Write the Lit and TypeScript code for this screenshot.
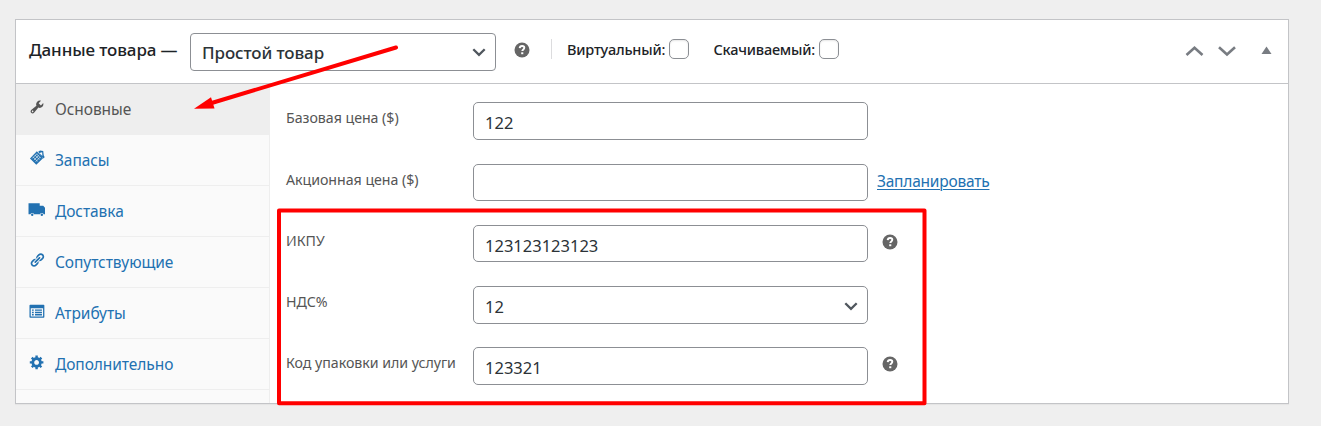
import { LitElement, html, css, svg } from "lit";
import { customElement } from "lit/decorators.js";

const icons: Record<string, unknown> = {
  wrench: svg`<path d="M16.68 9.77c-1.34 1.34-3.3 1.67-4.95.99l-5.41 6.52c-.99.99-2.59.99-3.58 0s-.99-2.59 0-3.57l6.52-5.42c-.68-1.65-.35-3.61.99-4.95 1.28-1.28 3.12-1.62 4.72-1.06l-2.89 2.89 2.82 2.82 2.86-2.87c.53 1.58.18 3.39-1.08 4.65zM3.81 16.21c.4.39 1.04.39 1.43 0 .4-.4.4-1.04 0-1.43-.39-.4-1.03-.4-1.43 0-.39.39-.39 1.03 0 1.43z"/>`,
  stock: svg`<path d="M9.800 1.500 1.200 10.700l7.900 7.800 8.700-8.400zM11.500 2.200l2.300-1.500 4 .6.600 5.400 1.200 2.300-1.800 1.500z"/><path d="M13 3.800l3.400-.9.300 4.600z" fill="#fafafa"/><path d="M4 10.600l5.900-6M6.100 12.700l5.900-6M8.200 14.800l5.900-6M5 8.500l5.700 5.800M7.300 6.200l5.700 5.800M9.300 4.700l5.400 5.500" fill="none" stroke="#fafafa" stroke-width=".75"/>`,
  truck: svg`<path d="M-.6 2.900h14v2.900h4.400L20 8.400v8.300h-1.700a2.300 2.300 0 0 0-4.500 0H6.300a2.300 2.300 0 0 0-4.500 0H-.6z"/><circle cx="4.050" cy="17.200" r="1.500"/><circle cx="16.050" cy="17.200" r="1.500"/>`,
  link: svg`<path d="M17.74 2.76c1.68 1.69 1.68 4.41 0 6.1l-1.53 1.52c-1.12 1.12-2.7 1.47-4.14 1.09l2.62-2.61.76-.77.76-.76c.84-.84.84-2.2 0-3.04-.84-.85-2.2-.85-3.04 0l-.77.76-3.38 3.38c-.37-1.44-.02-3.02 1.1-4.14l1.52-1.53c1.69-1.68 4.42-1.68 6.1 0zM8.59 13.43l5.34-5.34c.42-.42.42-1.1 0-1.52-.44-.43-1.13-.39-1.53 0l-5.33 5.34c-.42.42-.42 1.1 0 1.52.44.43 1.13.39 1.52 0zm-.76 2.29l4.14-4.15c.38 1.44.03 3.02-1.09 4.14l-1.52 1.53c-1.69 1.68-4.41 1.68-6.1 0-1.68-1.68-1.68-4.42 0-6.1l1.53-1.52c1.12-1.12 2.7-1.47 4.14-1.1l-4.14 4.15c-.85.84-.85 2.2 0 3.05.84.84 2.2.84 3.04 0z"/>`,
  list: svg`<path d="M18.300 18.500H1.500c-.5 0-.9-.4-.9-.9V3c0-.5.400-.9.900-.9h16.800c.5 0 .9.400.9.900v14.600c0 .5-.4.900-.9.900zM17.600 17V6.600H2.200V17zM7.500 8.100v1.700h8.700V8.100zM7.500 11v1.700h8.700V11zM7.500 13.900v1.700h8.700v-1.700zM3.700 8.100v1.700h2.200V8.100zM3.700 11v1.700h2.200V11zM3.700 13.900v1.700h2.200v-1.700z" fill-rule="evenodd"/>`,
  gear: svg`<path d="M18 12h-2.180c-.17.7-.44 1.350-.81 1.930l1.540 1.540-2.100 2.100-1.540-1.540c-.58.36-1.230.63-1.910.79V19H8v-2.180c-.68-.16-1.330-.43-1.910-.79l-1.540 1.540-2.120-2.120 1.540-1.540c-.36-.58-.63-1.230-.79-1.910H1V9.030h2.170c.16-.7.44-1.350.8-1.940L2.430 5.550l2.100-2.100 1.540 1.540c.58-.37 1.240-.64 1.930-.81V2h3v2.180c.68.16 1.330.43 1.910.79l1.540-1.540 2.120 2.120-1.540 1.540c.36.59.64 1.240.8 1.940H18V12zm-8.500 1.500c1.660 0 3-1.340 3-3s-1.340-3-3-3-3 1.340-3 3 1.340 3 3 3z"/>`,
};

const tabs = [
  ["wrench", "Основные"],
  ["stock", "Запасы"],
  ["truck", "Доставка"],
  ["link", "Сопутствующие"],
  ["list", "Атрибуты"],
  ["gear", "Дополнительно"],
];

const chevron = html`<svg width="14" height="9" viewBox="0 0 14 9"><path d="M1.300 1.300 7 6.900l5.700-5.600" fill="none" stroke="#50575e" stroke-width="2.300"/></svg>`;
const help = html`<svg class="help" width="16" height="16" viewBox="0 0 16 16"><circle cx="8" cy="8" r="7.500" fill="#666"/><path d="M5.700 6.100c.1-1.400 1-2.100 2.400-2.100 1.300 0 2.200.7 2.200 1.800 0 1.700-2 1.600-2 3.300" fill="none" stroke="#fff" stroke-width="1.900"/><rect x="7.200" y="10.300" width="2.100" height="1.900" fill="#fff"/></svg>`;

@customElement("app-root")
export class AppRoot extends LitElement {
  static styles = css`
    :host { display: block; position: relative; height: 426px; background: #efefef; overflow: hidden;
      font-family: "Noto Sans", "Open Sans", sans-serif; color: #1d2327; }
    * { box-sizing: border-box; }
    .page { padding: 19px 32px 0 15px; }
    .box { height: 385px; background: #fff; border: 1px solid #c3c4c7; box-shadow: 0 1px 1px rgba(0,0,0,.04); display: flex; flex-direction: column; }
    .head { height: 64px; flex: none; border-bottom: 1px solid #c3c4c7; display: flex; align-items: center; padding: 0 12px 0 13px; white-space: nowrap; }
    .title { width: 161px; font-size: 17px; font-weight: 500; letter-spacing: -.1px; padding-bottom: 4px; }
    .sel { border: 1px solid #8c8f94; border-radius: 4px; display: flex; align-items: center; justify-content: space-between; padding: 0 9px 0 11px; }
    .head .sel { width: 306px; height: 38px; font-size: 17px; font-weight: 500; letter-spacing: -.1px; color: #2c3338; margin-top: 1px; }
    .head .help { margin: -4px 0 0 18px; }
    .sep { width: 1px; height: 20px; background: #dcdcde; margin: -5px 15px 0 21px; }
    .opt { display: flex; align-items: center; font-size: 14.500px; font-weight: 500; letter-spacing: -.2px; margin-top: -5px; }
    .opt.a { width: 146.500px; }
    .check { width: 20px; height: 20px; border: 1px solid #8c8f94; border-radius: 5px; box-shadow: inset 0 1px 2px rgba(0,0,0,.1); margin-left: 4px; }
    .ctl { margin-left: auto; display: flex; align-items: center; margin-top: -1px; }
    .main { flex: 1; min-height: 0; display: flex; }
    .tabs { width: 254px; background: #fafafa; border-right: 1px solid #eee; display: flex; flex-direction: column; }
    .tab { height: 51px; border-bottom: 1px solid #eee; color: #2271b1; font-size: 15.500px; letter-spacing: -.07px; display: flex; align-items: center; padding-left: 13px; white-space: nowrap; }
    .tab.on { background: #eee; color: #555; }
    .ico { width: 16px; height: 16px; margin: -5px 10px 0 0; fill: currentColor; flex: none; overflow: visible; }
    .fields { padding: 18px 0 0 16px; display: flex; flex-direction: column; }
    .row { height: 61px; display: flex; align-items: flex-start; white-space: nowrap; }
    .row.first { height: 62px; }
    .row.last { height: 38px; }
    .lab { width: 187px; font-size: 14.200px; letter-spacing: -.03px; color: #555; line-height: 20px; padding-top: 6px; }
    .in { width: 395px; height: 38px; border: 1px solid #8c8f94; border-radius: 5px; display: flex; align-items: center; padding: 3px 9px 0 11px; font-size: 16.500px; color: #2c3338; }
    .in.s { height: 37px; }
    .in.pick { justify-content: space-between; }
    .link { color: #2271b1; font-size: 15.500px; letter-spacing: -.22px; text-decoration: underline; text-decoration-thickness: 1px; text-underline-offset: 2px; margin: 6px 0 0 9px; line-height: 22px; }
    .row .help { margin: 9px 0 0 14px; }
    .marks { position: absolute; left: 0; top: 0; }
  `;

  render() {
    return html`
      <div class="page"><div class="box">
        <div class="head">
          <div class="title">Данные товара —</div>
          <div class="sel"><span>Простой товар</span>${chevron}</div>
          ${help}<div class="sep"></div>
          <div class="opt a"><span>Виртуальный:</span><span class="check"></span></div>
          <div class="opt"><span>Скачиваемый:</span><span class="check"></span></div>
          <div class="ctl">
            <svg width="92" height="20" viewBox="0 0 92 20"><g fill="none" stroke="#787c82" stroke-width="2.600"><path d="M2.500 14 10.500 6.800l8 7.200"/><path d="M35 6.300 43 13.500l8-7.200"/></g><path d="M77.500 13h10l-5-7.500z" fill="#787c82"/></svg>
          </div>
        </div>
        <div class="main">
          <div class="tabs">
            ${tabs.map(([icon, text], n) => html`<div class="tab ${n ? "" : "on"}"><svg class="ico" viewBox="0 0 20 20">${icons[icon]}</svg><span>${text}</span></div>`)}
          </div>
          <div class="fields">
            <div class="row first"><div class="lab">Базовая цена ($)</div><div class="in">122</div></div>
            <div class="row"><div class="lab">Акционная цена ($)</div><div class="in s"></div><span class="link">Запланировать</span></div>
            <div class="row"><div class="lab">ИКПУ</div><div class="in s">123123123123</div>${help}</div>
            <div class="row"><div class="lab">НДС%</div><div class="in pick"><span>12</span>${chevron}</div></div>
            <div class="row last"><div class="lab">Код упаковки или услуги</div><div class="in">123321</div>${help}</div>
          </div>
        </div>
      </div></div>
      <svg class="marks" width="1321" height="426" viewBox="0 0 1321 426">
        <rect x="279" y="210.500" width="645.500" height="192.700" fill="none" stroke="#f00" stroke-width="4" stroke-linejoin="round"/>
        <path d="M396 47.500 210 103.500" stroke="#f00" stroke-width="4" stroke-linecap="round"/>
        <path d="M194 108.700 211 97.300l3.500 11.200z" fill="#f00"/>
      </svg>
    `;
  }
}
